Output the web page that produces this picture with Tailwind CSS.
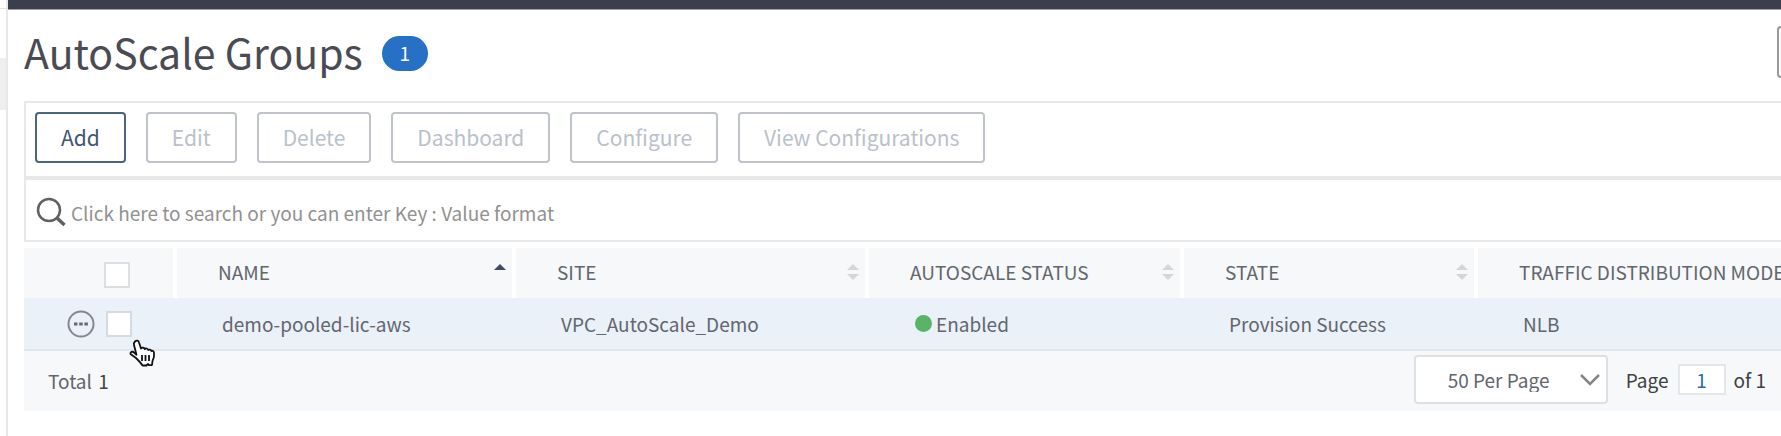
<!DOCTYPE html>
<html lang="en">
  <head>
    <meta charset="UTF-8" />
    <meta name="viewport" content="width=device-width, initial-scale=1.0" />
    <title>AutoScale Groups</title>
    <script src="https://cdn.jsdelivr.net/npm/@tailwindcss/browser@4"></script>
  </head>
  <body class="flex min-h-screen overflow-x-hidden bg-white font-['Noto_Sans_CJK_SC','Noto_Sans',sans-serif] text-[19px] leading-6 text-[#62666d]">
    <!-- Collapsed side menu -->
    <nav class="flex w-2 shrink-0 flex-col border-r-2 border-[#e8e8ea]">
      <div class="h-[9px] border-b border-[#e4e4e6]"></div>
      <div class="mt-[49px] h-[52px] bg-[#eeefef]"></div>
    </nav>

    <div class="min-w-0 flex-1">
      <div class="h-[10px] border-b border-[#9a9ea8] bg-[#3b3f4b]"></div>

      <!-- Title -->
      <header class="flex h-[91px] items-start overflow-hidden pl-4 pt-4">
        <h1 class="whitespace-nowrap text-[41px] leading-[50px] text-[#4a4b54]">AutoScale Groups</h1>
        <span class="ml-[19px] mt-[10px] flex h-[35px] w-[46px] items-center justify-center rounded-full bg-[#2670c6] pb-[2px] text-white">1</span>
        <button aria-label="Refresh" class="-mr-12 ml-auto h-[52px] w-[52px] shrink-0 rounded border-2 border-[#999]"></button>
      </header>

      <main class="pl-4">
        <!-- Actions -->
        <div class="flex gap-5 border-b-4 border-l-2 border-t-2 border-[#e8e8e8] pb-[13px] pl-[9px] pt-[9px] text-[21px]">
          <button class="h-[51px] rounded border-2 border-[#4b6482] px-6 pb-[2px] text-[#3d5676]">Add</button>
          <button disabled class="h-[51px] rounded border-2 border-[#bfc4cb] px-6 pb-[2px] text-[#b9c1cb]">Edit</button>
          <button disabled class="h-[51px] rounded border-2 border-[#bfc4cb] px-6 pb-[2px] text-[#b9c1cb]">Delete</button>
          <button disabled class="h-[51px] rounded border-2 border-[#bfc4cb] px-6 pb-[2px] text-[#b9c1cb]">Dashboard</button>
          <button disabled class="h-[51px] rounded border-2 border-[#bfc4cb] px-6 pb-[2px] text-[#b9c1cb]">Configure</button>
          <button disabled class="h-[51px] rounded border-2 border-[#bfc4cb] px-6 pb-[2px] text-[#b9c1cb]">View Configurations</button>
        </div>

        <!-- Search -->
        <label class="flex h-[62px] items-center gap-[5px] border-b-2 border-l-2 border-[#e8e8e8] pl-[10px] pt-1">
          <svg class="h-[30px] w-[30px] shrink-0" viewBox="0 0 30 30" fill="none" stroke="#606060">
            <circle cx="13" cy="13" r="11" stroke-width="2.5" />
            <path d="M21 21l7.500 7" stroke-width="3.500" />
          </svg>
          <input type="text" aria-label="Search" placeholder="Click here to search or you can enter Key : Value format" class="h-10 min-w-0 flex-1 outline-none placeholder:text-[#919191]" />
        </label>

        <!-- Groups -->
        <table class="mt-[6px] w-full table-fixed text-left">
          <colgroup>
            <col class="w-[151px]" />
            <col class="w-[339px]" />
            <col class="w-[353px]" />
            <col class="w-[315px]" />
            <col class="w-[294px]" />
            <col />
          </colgroup>
          <thead class="bg-[#f6f8fa]">
            <tr class="h-[50px]">
              <th class="border-r-4 border-white pl-20 pt-1">
                <input type="checkbox" aria-label="Select all" class="block h-[26px] w-[26px] appearance-none border-2 border-[#dcdee1] bg-white" />
              </th>
              <th class="border-x-4 border-white pb-[2px] pl-[41px] pr-[6px] font-normal">
                <div class="flex items-center justify-between">NAME
                  <svg class="h-[18px] w-3" viewBox="0 0 12 18"><path d="M0 7l6-6 6 6z" fill="#434a67" /></svg>
                </div>
              </th>
              <th class="border-x-4 border-white pb-[2px] pl-[41px] pr-[6px] font-normal">
                <div class="flex items-center justify-between">SITE
                  <svg class="h-[18px] w-3" viewBox="0 0 12 18" fill="#d5d6d8"><path d="M0 7l6-6 6 6zM0 11h12l-6 6z" /></svg>
                </div>
              </th>
              <th class="border-x-4 border-white pb-[2px] pl-[41px] pr-[6px] font-normal">
                <div class="flex items-center justify-between">AUTOSCALE STATUS
                  <svg class="h-[18px] w-3" viewBox="0 0 12 18" fill="#d5d6d8"><path d="M0 7l6-6 6 6zM0 11h12l-6 6z" /></svg>
                </div>
              </th>
              <th class="border-x-4 border-white pb-[2px] pl-[41px] pr-[6px] font-normal">
                <div class="flex items-center justify-between">STATE
                  <svg class="h-[18px] w-3" viewBox="0 0 12 18" fill="#d5d6d8"><path d="M0 7l6-6 6 6zM0 11h12l-6 6z" /></svg>
                </div>
              </th>
              <th class="overflow-hidden whitespace-nowrap border-l-4 border-white pb-[2px] pl-[41px] font-normal">TRAFFIC DISTRIBUTION MODE</th>
            </tr>
          </thead>
          <tbody>
            <tr class="h-[52px] border-b-2 border-[#e2e6ee] bg-[#ebf1f9]">
              <td class="relative pl-[43px]">
                <div class="flex items-center gap-[11px]">
                  <button aria-label="Row actions">
                    <svg class="h-7 w-7" viewBox="0 0 28 28" fill="none" stroke="#83878e" stroke-width="2">
                      <circle cx="14" cy="14" r="12.500" />
                      <path d="M7 14h3.500m1.700 0h3.500m1.700 0h3.500" stroke="#666a72" stroke-width="3" />
                    </svg>
                  </button>
                  <input type="checkbox" aria-label="Select demo-pooled-lic-aws" class="h-[26px] w-[26px] appearance-none border-2 border-[#d6dae0] bg-white" />
                </div>
                <!-- Pointer -->
                <svg class="absolute left-[105px] top-[41px] h-7 w-7" viewBox="0 0 28 28" fill="#fff" stroke="#111" stroke-width="1.800" stroke-linejoin="round">
                  <path d="M6 2.500C7.500 1 9.500 1.500 10 3.500l2 6c1-1.300 3-1 3.700.5 1-1 3-.6 3.600 1 1-.8 2.600-.3 3.200 1 1-.6 2.300 0 2.500 1.500.4 3 .2 5.500-1.500 8.500l-.5 4-3 .2-1-1.200-1.500 1.500h-4c-1.500-2.500-4-5-6.500-7.500L1.500 15C1 13 3.500 12 5 13.500l2.500 2.200L5 6C4.600 4.500 5 3.500 6 2.500z" />
                  <path d="M13 16v6m3.500-6v6m3.500-6v6" />
                </svg>
              </td>
              <td class="pl-[47px]">demo-pooled-lic-aws</td>
              <td class="pl-[47px]">VPC_AutoScale_Demo</td>
              <td class="pl-12">
                <div class="flex items-center gap-1"><span class="h-[17px] w-[17px] rounded-full bg-[#59b368]"></span>Enabled</div>
              </td>
              <td class="pl-[47px]">Provision Success</td>
              <td class="pl-[47px]">NLB</td>
            </tr>
          </tbody>
        </table>

        <!-- Footer -->
        <div class="flex h-[60px] items-center bg-[#f6f8fa] pb-[3px] pl-6 pr-[15px]">
          <span class="pt-[2px]">Total <span class="ml-[2px] text-[#444]">1</span></span>
          <div class="relative ml-auto">
            <select aria-label="Rows per page" class="block h-[49px] w-[194px] appearance-none rounded border-2 border-[#dfe0e2] bg-white pl-8">
              <option>50 Per Page</option>
            </select>
            <svg class="pointer-events-none absolute right-2 top-[19px] h-3 w-5" viewBox="0 0 20 12" fill="none" stroke="#858585" stroke-width="2.500"><path d="M1 1l9 9 9-9" /></svg>
          </div>
          <label class="ml-[18px] flex items-center gap-[9px] text-[#3f4042]">Page
            <input type="text" value="1" class="h-[31px] w-12 border-2 border-[#e3e6ea] bg-white text-center text-[#2a6da8]" />
          </label>
          <span class="ml-2 text-[#3f4042]">of 1</span>
        </div>
      </main>
    </div>
  </body>
</html>
